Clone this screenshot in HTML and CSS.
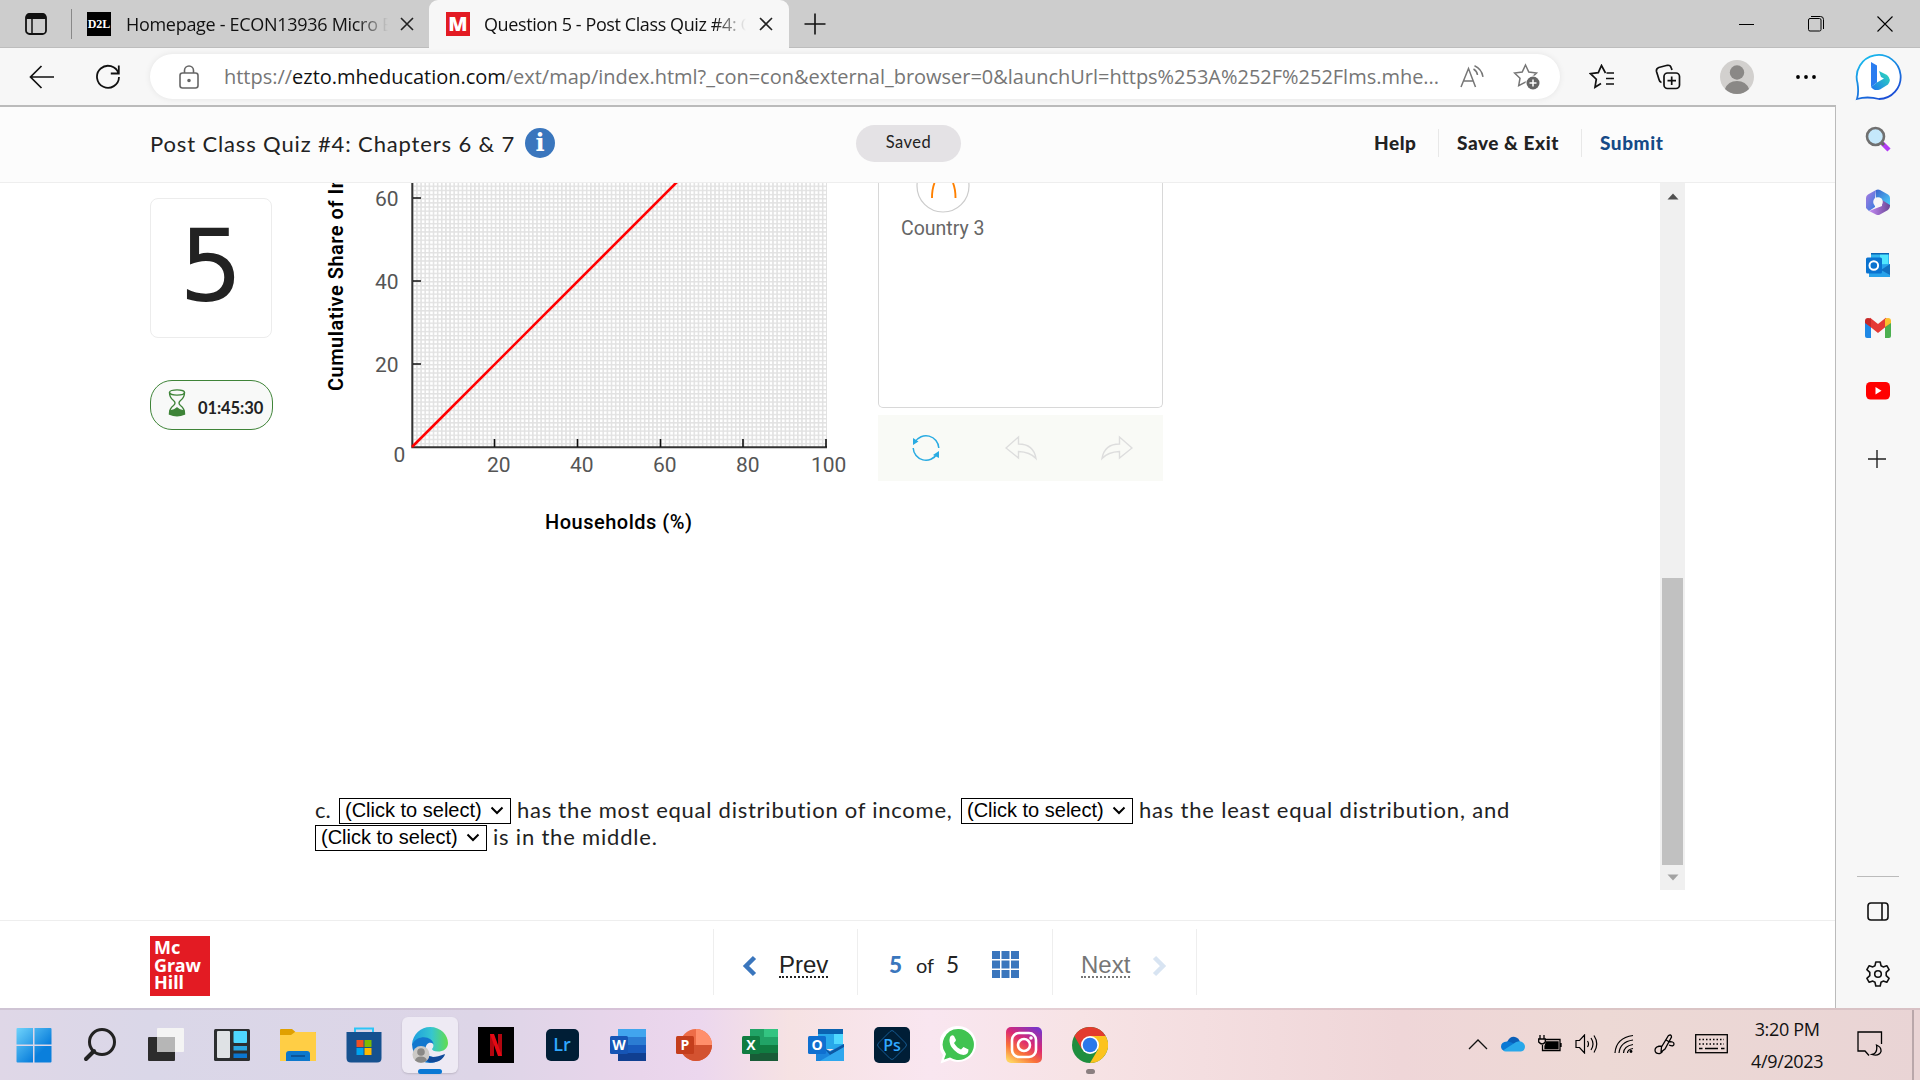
FILE: index.html
```html
<!DOCTYPE html>
<html lang="en">
<head>
  <meta charset="UTF-8" />
  <meta name="viewport" content="width=device-width, initial-scale=1.0"/>
  <title>Question 5 - Post Class Quiz #4: Chapters 6 &amp; 7</title>
  <link rel="stylesheet" href="styles.css">
</head>
<body>

  <!-- Tabs -->
  <div class="tab-bar">
    <svg class="workspace-icon" width="24" height="24" viewBox="0 0 24 24"><rect x="2" y="2" width="20" height="20" rx="3.500" fill="none" stroke="#111" stroke-width="1.800"/><path d="M2 7V5q0-3.500 3.500-3.500h13q3.500 0 3.500 3.500v2z" fill="#111"/><path d="M8 7v15" stroke="#111" stroke-width="1.500"/></svg>
    <div class="tab">
      <span class="favicon d2l">D2L</span>
      <span class="tab-title">Homepage - ECON13936 Micro E</span>
      <svg width="14" height="14" viewBox="0 0 14 14"><path d="M1 1l12 12M13 1L1 13" stroke="#222" stroke-width="1.600"/></svg>
    </div>
    <div class="tab active">
      <span class="favicon mh">M</span>
      <span class="tab-title">Question 5 - Post Class Quiz #4: C</span>
      <svg width="14" height="14" viewBox="0 0 14 14"><path d="M1 1l12 12M13 1L1 13" stroke="#222" stroke-width="1.600"/></svg>
    </div>
    <svg class="new-tab" width="22" height="22" viewBox="0 0 22 22"><path d="M11 0.500v21M0.500 11h21" stroke="#111" stroke-width="1.600"/></svg>
    <div class="window-buttons">
      <svg width="16" height="16" viewBox="0 0 16 16"><path d="M0 8.500h15" stroke="#000"/></svg>
      <svg width="16" height="16" viewBox="0 0 16 16" fill="none" stroke="#000"><rect x="0.500" y="2.500" width="12.500" height="12.500" rx="1.500"/><path d="M3 0.500h9.500q3 0 3 3v9.500"/></svg>
      <svg width="16" height="16" viewBox="0 0 16 16"><path d="M0.500 0.500l15 15M15.500 0.500l-15 15" stroke="#000" stroke-width="1.100"/></svg>
    </div>
  </div>

  <!-- Address bar -->
  <div class="toolbar">
    <svg class="back" width="26" height="24" viewBox="0 0 26 24" fill="none" stroke="#111" stroke-width="1.700"><path d="M25 12H2M12.500 1L1.500 12l11 11"/></svg>
    <svg class="reload" width="26" height="26" viewBox="0 0 26 26" fill="none" stroke="#111" stroke-width="1.800"><path d="M23.500 9.500A11 11 0 1 0 24 13M23.800 1.500v8h-8"/></svg>
    <div class="address">
      <svg width="20" height="24" viewBox="0 0 20 24" fill="none" stroke="#666" stroke-width="1.600"><rect x="1" y="8" width="18" height="15" rx="2.500"/><path d="M5.500 8V5.500a4.500 4.500 0 0 1 9 0V8"/><circle cx="10" cy="15.500" r="1" fill="#666"/></svg>
      <span class="url">https://<b>ezto.mheducation.com</b>/ext/map/index.html?_con=con&amp;external_browser=0&amp;launchUrl=https%253A%252F%252Flms.mhe...</span>
      <svg class="read-aloud" width="24" height="24" viewBox="0 0 24 24" fill="none" stroke="#767676" stroke-width="1.500"><path d="M1 22L8.500 3.500 15.500 22M3.500 16h10M13.500 4q3.500 2 4 6M14.500 .8q7 3 8.500 11"/></svg>
      <svg width="28" height="28" viewBox="0 0 28 28"><path d="M12.500 2l3.300 7 7.700 1-5.500 5.200 1.300 7.500-6.800-3.700-6.800 3.700L7 15.200 1.500 10l7.700-1z" fill="none" stroke="#767676" stroke-width="1.500"/><circle cx="20" cy="20" r="7.500" fill="#fff"/><circle cx="20" cy="20" r="6.500" fill="#666"/><path d="M20 16.500v7M16.500 20h7" stroke="#fff" stroke-width="1.500"/></svg>
    </div>
    <svg class="favorites" width="26" height="26" viewBox="0 0 26 26" fill="none" stroke="#111" stroke-width="1.700"><path d="M16.500 9L12.500 1.500 9.300 8.700 1.500 9.700 7.300 15.200 6 23.200 12 19.500M17.500 9H25M17 14.500h8M17 20h8"/></svg>
    <svg class="collections" width="26" height="26" viewBox="0 0 26 26" fill="none" stroke="#111" stroke-width="1.700"><rect x="9" y="9" width="15.500" height="15.500" rx="3.500"/><path d="M16.700 12.500v8.500M12.500 16.700H21M6.500 18.500Q4.500 18 4 15.500L1.500 7.500Q1 4.500 3.800 3.500l8.500-2.200Q15.500 .8 16.300 4l.7 2"/></svg>
    <svg class="avatar" width="34" height="34" viewBox="0 0 34 34"><circle cx="17" cy="17" r="17" fill="#d2d0ce"/><circle cx="17" cy="12.500" r="7.200" fill="#8a8886"/><path d="M5 29q3-8 12-8t12 8q-5 5-12 5T5 29" fill="#8a8886"/></svg>
    <svg class="more" width="20" height="4" viewBox="0 0 20 4"><circle cx="2" cy="2" r="1.900"/><circle cx="10" cy="2" r="1.900"/><circle cx="18" cy="2" r="1.900"/></svg>
    <svg class="bing" width="48" height="48" viewBox="0 0 48 48">
      <defs><linearGradient id="bingRing" x2="0.600" y2="1"><stop stop-color="#19c8f0"/><stop offset="1" stop-color="#1a4fd6"/></linearGradient><linearGradient id="bingTail" x1="1" x2="0" y2="1"><stop stop-color="#2ce0b8"/><stop offset="1" stop-color="#1e74f0"/></linearGradient></defs>
      <path d="M2 46Q4 40 2.500 30A22 22 0 1 1 24 46Q12 43 2 46z" fill="#fff" stroke="url(#bingRing)" stroke-width="1.800"/>
      <path d="M16 9l6 3.500v17L16 34z" fill="#2a7df0"/><path d="M16 34l6-4.500 7-4-3-1.500-2-6 8 4q5 4.500 1 9.500l-8 5q-6 2-9-2.500" fill="url(#bingTail)"/>
    </svg>
  </div>

  <div class="main">
    <div class="page">
      <header class="quiz-header">
        <h1>Post Class Quiz #4: Chapters 6 &amp; 7</h1>
        <span class="info">i</span>
        <span class="saved">Saved</span>
        <nav>
          <a class="help">Help</a>
          <a class="exit">Save &amp; Exit</a>
          <a class="submit">Submit</a>
        </nav>
      </header>

      <div class="content">
        <div class="question-side">
          <div class="question-number">5</div>
          <div class="timer">
            <svg width="18" height="28" viewBox="0 0 18 28" fill="none" stroke="#3e8438" stroke-width="1.400"><ellipse cx="9" cy="3.500" rx="7.500" ry="2.600"/><path d="M1.500 3.500q0 5 4 8 3 2.500 0 5-4 3-4 8M16.500 3.500q0 5-4 8-3 2.500 0 5 4 3 4 8"/><path d="M2 22q5-1 7-3 2 2 7 3l.5 3q-7.500 3.500-15 0z" fill="#3e8438"/></svg>
            <span>01:45:30</span>
          </div>
        </div>

        <div class="question">
          <div class="graph-row">
            <svg class="graph" width="563" height="370" viewBox="315 183 563 370">
              <defs>
                <pattern id="grid" x="412" y="447" width="4.140" height="4.150" patternUnits="userSpaceOnUse">
                  <path d="M0 0.750H4.140M0.750 0V4.150" stroke="#e2e2e2" stroke-width="1.600"/>
                </pattern>
              </defs>
              <rect x="412" y="183" width="415" height="264" fill="url(#grid)"/>
              <path d="M412.300 183V447.300H827" fill="none" stroke="#333" stroke-width="2"/>
              <path d="M413 364h8M413 281h8M413 198h8M494.500 439v8M577.500 439v8M660.500 439v8M743 439v8M826 439v8" stroke="#111" stroke-width="1.600"/>
              <path d="M412 447L677 182" stroke="#f00" stroke-width="2.600"/>
              <g class="ticks">
                <text x="375" y="206">60</text><text x="375" y="289">40</text><text x="375" y="372">20</text><text x="393.500" y="462">0</text>
                <text x="487" y="472">20</text><text x="570" y="472">40</text><text x="653" y="472">60</text><text x="736" y="472">80</text><text x="811" y="472">100</text>
              </g>
              <text class="axis-title" x="545" y="529">Households (%)</text>
              <text class="axis-title y-title" transform="translate(343 391) rotate(-90)">Cumulative Share of In</text>
            </svg>
            <div class="tools">
              <div class="tool-box">
                <svg width="54" height="30" viewBox="0 0 54 30" fill="none"><circle cx="27" cy="3" r="26" stroke="#ccc" stroke-width="1.200"/><path d="M16 15q0-9 2.500-15M39.500 15q0-9-2.500-15" stroke="#ff8000" stroke-width="1.900"/></svg>
                <span>Country 3</span>
              </div>
              <div class="tool-buttons">
                <svg width="30" height="30" viewBox="0 0 30 30" fill="none" stroke="#29abe2" stroke-width="1.500"><path d="M4 9A12.800 12.800 0 0 1 27.800 15M2.200 15A12.800 12.800 0 0 0 26 21"/><path d="M2 5v7l5.500-3.500zM28 25v-7l-6 4z" fill="#29abe2" stroke="none"/></svg>
                <svg width="32" height="26" viewBox="0 0 32 26" fill="none" stroke="#ddd" stroke-width="1.400"><path d="M1 13L13.500 2v7q15 0 17.500 14.500Q25 17 13.500 16.500V23z"/></svg>
                <svg width="32" height="26" viewBox="0 0 32 26" fill="none" stroke="#ddd" stroke-width="1.400"><path d="M31 13L18.500 2v7Q3.500 9 1 23.500 7 17 18.500 16.500V23z"/></svg>
              </div>
            </div>
          </div>

          <div class="statement">
            <p><span class="letter">c.</span><span class="select">(Click to select)<svg width="14" height="9" viewBox="0 0 14 9"><path d="M1.500 1.500L7 7l5.500-5.500" fill="none" stroke="#000" stroke-width="2"/></svg></span><span class="part-one">has the most equal distribution of income,</span><span class="select">(Click to select)<svg width="14" height="9" viewBox="0 0 14 9"><path d="M1.500 1.500L7 7l5.500-5.500" fill="none" stroke="#000" stroke-width="2"/></svg></span><span class="part-two">has the least equal distribution, and</span></p>
            <p><span class="select">(Click to select)<svg width="14" height="9" viewBox="0 0 14 9"><path d="M1.500 1.500L7 7l5.500-5.500" fill="none" stroke="#000" stroke-width="2"/></svg></span><span class="part-three">is in the middle.</span></p>
          </div>
        </div>

        <div class="scrollbar">
          <svg width="12" height="7" viewBox="0 0 12 7"><path d="M0.500 6.500L6 0.500l5.500 6z" fill="#505050"/></svg>
          <div class="thumb"></div>
          <svg width="12" height="7" viewBox="0 0 12 7"><path d="M0.500 0.500L6 6.500l5.500-6z" fill="#a3a3a3"/></svg>
        </div>
      </div>

      <footer class="quiz-footer">
        <div class="logo"><span>Mc</span><span>Graw</span><span>Hill</span></div>
        <div class="pager">
          <div class="prev">
            <svg width="15" height="22" viewBox="0 0 15 22"><path d="M12.500 2.500L4 11l8.500 8.500" fill="none" stroke="#3a76bd" stroke-width="4.500"/></svg>
            <a>Prev</a>
          </div>
          <div class="count">
            <b>5</b><span class="of">of</span><span>5</span>
            <svg width="27" height="27" viewBox="0 0 27 27" fill="#3a76bd"><path d="M0 0h8v8H0zM9.500 0h8v8h-8zM19 0h8v8h-8zM0 9.500h8v8H0zM9.500 9.500h8v8h-8zM19 9.500h8v8h-8zM0 19h8v8H0zM9.500 19h8v8h-8zM19 19h8v8h-8z"/></svg>
          </div>
          <div class="next">
            <a>Next</a>
            <svg width="15" height="22" viewBox="0 0 15 22"><path d="M2.500 2.500L11 11l-8.500 8.500" fill="none" stroke="#d8e4f2" stroke-width="4.500"/></svg>
          </div>
        </div>
      </footer>
    </div>

    <!-- Edge sidebar -->
    <aside class="sidebar">
      <svg width="26" height="26" viewBox="0 0 26 26"><path d="M17 17l7 7" stroke="#b33df5" stroke-width="4.500"/><path d="M16 16l3 3" stroke="#666" stroke-width="3"/><circle cx="10.500" cy="10.500" r="8.500" fill="#c5e8fb" stroke="#707070" stroke-width="2.600"/></svg>
      <svg width="26" height="28" viewBox="0 0 26 28">
        <defs><linearGradient id="mLeft" y2="1"><stop stop-color="#b07ae0"/><stop offset="1" stop-color="#2b7de0"/></linearGradient><linearGradient id="mBottom" x2="1"><stop stop-color="#c58bf5"/><stop offset="1" stop-color="#6a4796"/></linearGradient><linearGradient id="mRight" x2="1" y2="1"><stop stop-color="#3a62cc"/><stop offset="1" stop-color="#4bd0fa"/></linearGradient></defs>
        <path d="M11 2L3 6.500Q1 7.500 1 10v10l3 3 6-4V11z" fill="url(#mLeft)"/><path d="M4 23l7 3.500q2 1 4 0l8-4.500q2-1.500 2-4V16l-8-5v7z" fill="url(#mBottom)"/><path d="M11 2q2-1 4 0l8 4.500q2 1 2 3.500v7l-8-5-6-2z" fill="url(#mRight)"/><circle cx="13" cy="14" r="4.800" fill="#f7f7f7"/></svg>
      <svg width="26" height="26" viewBox="0 0 26 26"><path d="M6 1h18v15H6z" fill="#32b5ee"/><path d="M15 2h8v10h-8z" fill="#50e6ff"/><path d="M6 1h18v1.500H6z" fill="#0a64b4"/><path d="M4 14l21-2v13H4z" fill="#28a2ea"/><path d="M16 18l9-6v11z" fill="#1270c0"/><rect x="1" y="5.500" width="16" height="16" rx="1.500" fill="#0a73d0"/><circle cx="8.800" cy="13.500" r="4.300" fill="none" stroke="#fff" stroke-width="2"/></svg>
      <svg width="28" height="22" viewBox="0 0 28 22"><path d="M1 5h6v16H3q-2 0-2-2z" fill="#1e88e5"/><path d="M21 5h6v14q0 2-2 2h-4z" fill="#4caf50"/><path d="M4 3.500l10 8 10-8" fill="none" stroke="#e53935" stroke-width="7"/><path d="M1 4q0-3 3-3 1.500 0 3 1v8L1 6z" fill="#c62828"/><path d="M27 4q0-3-3-3-1.500 0-3 1v8l6-4z" fill="#fbc02d"/></svg>
      <svg width="24" height="18" viewBox="0 0 24 18"><rect width="24" height="17.500" rx="4.500" fill="#f00"/><path d="M9.500 5l6 3.700-6 3.700z" fill="#fff"/></svg>
      <svg class="add" width="18" height="18" viewBox="0 0 18 18"><path d="M9 0v18M0 9h18" stroke="#222" stroke-width="1.400"/></svg>
      <hr>
      <svg class="panel-icon" width="22" height="19" viewBox="0 0 22 19" fill="none" stroke="#111" stroke-width="1.600"><rect x="1" y="1" width="20" height="17" rx="3"/><path d="M15 1v17"/></svg>
      <svg width="26" height="26" viewBox="0 0 26 26" fill="none" stroke="#111" stroke-width="1.600" stroke-linejoin="round"><circle cx="13" cy="13" r="3.300"/><path d="M10.800 1h4.400l.8 3.700 2.200 1.200 3.600-1.200 2.300 3.900-2.900 2.700v3.400l2.900 2.700-2.300 3.900-3.600-1.200-2.200 1.200-.8 3.700h-4.400l-.8-3.700-2.200-1.200-3.600 1.200-2.300-3.900 2.900-2.700v-3.400L1.900 8.600l2.300-3.900 3.600 1.200L10 4.700z"/></svg>
    </aside>
  </div>

  <!-- Windows taskbar -->
  <div class="taskbar">
    <div class="apps">
      <div class="app"><svg width="36" height="36" viewBox="0 0 36 36"><defs><linearGradient id="win" x2="1" y2="1"><stop stop-color="#6fd3fb"/><stop offset="0.700" stop-color="#0a7fdc"/></linearGradient></defs><path d="M0.500 2q0-1 1-1H17v16.500H.5zM18.500 1h16q1 0 1 1v15.500h-17zM.5 19H17v16.500H1.500q-1 0-1-1zM18.500 19h17v15.500q0 1-1 1h-16z" fill="url(#win)"/></svg></div>
      <div class="app"><svg width="34" height="36" viewBox="0 0 34 36" fill="none" stroke="#222"><circle cx="19" cy="15" r="12.500" stroke-width="3"/><path d="M11 24l-8 8" stroke-width="4" stroke-linecap="round"/></svg></div>
      <div class="app"><svg width="36" height="34" viewBox="0 0 36 34"><rect y="9" width="27" height="24" rx="1" fill="#2c2c2c"/><rect x="9" width="27" height="24" rx="1" fill="#f4f4f4"/><path d="M9 9h18v15H9z" fill="#b6b6b6"/></svg></div>
      <div class="app"><svg width="36" height="34" viewBox="0 0 36 34"><rect y="1" width="36" height="32" rx="1.500" fill="#2c2e30"/><rect x="3" y="3" width="13" height="27" rx="1" fill="#dfe2e5"/><rect x="19.500" y="3" width="13.500" height="12" rx="1" fill="#4fd8ff"/><path d="M19.500 18H33v4.500H19.500z" fill="#2ba6e0"/><path d="M19.500 25.500H33V30H19.500z" fill="#0b76d1"/></svg></div>
      <div class="app"><svg width="36" height="34" viewBox="0 0 36 34"><path d="M0 2q0-1 1-1h11l3.500 3H35q1 0 1 1v6H0z" fill="#e0a000"/><path d="M0 7h11l4-3h20q1 0 1 1v28H0z" fill="#ffce45"/><path d="M6 33V26q0-3 3-3h18q3 0 3 3v7z" fill="#0d78cc"/><path d="M11 28h14" stroke="#0a4a8a" stroke-width="1.500"/></svg></div>
      <div class="app"><svg width="36" height="36" viewBox="0 0 36 36"><path d="M9 7V1.500h18V7" fill="none" stroke="#2cc5f7" stroke-width="2"/><path d="M.5 5h35v26q0 4.500-4.500 4.500H5Q.5 35.500.5 31z" fill="#16518f"/><path d="M10.500 13h7v7h-7z" fill="#f25022"/><path d="M18.500 13h7v7h-7z" fill="#7fba00"/><path d="M10.500 21h7v7h-7z" fill="#00a4ef"/><path d="M18.500 21h7v7h-7z" fill="#ffb900"/></svg></div>
      <div class="app open">
        <svg width="38" height="38" viewBox="0 0 38 38"><defs><linearGradient id="edgeTop" x2="1"><stop stop-color="#1d9de0"/><stop offset="0.550" stop-color="#36c6cf"/><stop offset="1" stop-color="#62dd4e"/></linearGradient></defs>
          <path d="M1 18C2 8 10 1 19 1c11 0 18 8 18 16 0 6-5 8.500-10 8.500-4 0-6-1.500-6-2.500 1-1 2-3 1-5-2-6-12-8-21 0" fill="url(#edgeTop)"/><path d="M1 18C8 7 22 11 22.500 18c-4-3-8 0-8 5 0 7 8 11 19 6Q28 37 19 37 2 36 1 18" fill="#1377ce"/><path d="M14.500 22q-1 14 19.500 6-1 4-6 7-10 4-16-3-2-5 2.500-10" fill="#114a9a"/><circle cx="10" cy="28.500" r="8.500" fill="#ccc9c6"/><circle cx="10" cy="26" r="3.800" fill="#8a8886"/><path d="M4 34.500q1-4 6-4t6 4q-6 4.500-12 0" fill="#8a8886"/></svg>
      </div>
      <div class="app"><svg width="36" height="36" viewBox="0 0 36 36"><path d="M0 0h36v36H0z"/><path d="M14 7v22M22 7v22" stroke="#b1060f" stroke-width="4"/><path d="M12 7h4l8 22h-4z" fill="#e50914"/></svg></div>
      <div class="app"><span class="tile lr">Lr</span></div>
      <div class="app"><svg width="36" height="34" viewBox="0 0 36 34"><path d="M8 1h28v8H8z" fill="#41a5ee"/><path d="M8 9h28v8H8z" fill="#2b7cd3"/><path d="M8 17h28v8H8z" fill="#185abd"/><path d="M8 25h28v8H8z" fill="#103f91"/><rect y="8" width="18" height="18" rx="1.500" fill="#1655b5"/><text x="9" y="22" class="office">W</text></svg></div>
      <div class="app"><svg width="36" height="34" viewBox="0 0 36 34"><circle cx="20" cy="17" r="16" fill="#ed6c47"/><path d="M20 1a16 16 0 0 1 16 16H20z" fill="#ff8f6b"/><path d="M4 17h32a16 16 0 0 1-32 0" fill="#d35230"/><rect y="8" width="18" height="18" rx="1.500" fill="#c43e1c"/><text x="9" y="22" class="office">P</text></svg></div>
      <div class="app"><svg width="36" height="34" viewBox="0 0 36 34"><path d="M8 1h28v32H8z" fill="#21a366"/><path d="M22 1h14v8H22z" fill="#33c481"/><path d="M8 17h28v8H8z" fill="#107c41"/><path d="M8 25h28v8H8z" fill="#185c37"/><rect y="8" width="18" height="18" rx="1.500" fill="#107c41"/><text x="9" y="22" class="office">X</text></svg></div>
      <div class="app"><svg width="36" height="34" viewBox="0 0 36 34"><path d="M10 1h25v20H10z" fill="#28a8ea"/><path d="M10 1h25v5H10z" fill="#0a62b0"/><path d="M26 6h9v10h-9z" fill="#50d9ff"/><path d="M8 16l14 7 14-7v17H8z" fill="#1a84dc"/><path d="M16 20l6 4 14-8v4l-14 7z" fill="#0c58a4"/><path d="M36 19v14H12z" fill="#2fa7ee"/><rect y="8" width="18" height="18" rx="1.500" fill="#0f6fd0"/><text x="9" y="22" class="office">O</text></svg></div>
      <div class="app"><span class="tile ps"><svg width="36" height="36" viewBox="0 0 36 36"><path d="M16 4.500q2-2 4 0L31.500 16q2 2 0 4L20 31.500q-2 2-4 0L4.500 20q-2-2 0-4z" fill="none" stroke="#155a92"/><text x="18" y="24">Ps</text></svg></span></div>
      <div class="app"><svg width="36" height="38" viewBox="0 0 36 38"><path d="M18 0a18 18 0 1 1-8 34L.5 37.500 3 29A18 18 0 0 1 18 0" fill="#fff"/><path d="M18 3a15.500 15.500 0 1 1-8 28.500L4 33.500 6 28A15.500 15.500 0 0 1 18 3" fill="#40c351"/><path d="M10 11q2-3 4-1l2 4q0 1-2 3 3 5 7 6.500l2.500-2.500 5 2.500q0 5-5 5.500-7-1-12-8-3-5-1.500-10" fill="#fff"/></svg></div>
      <div class="app"><svg width="36" height="36" viewBox="0 0 36 36"><defs><linearGradient id="insta" x1="0.200" y1="1" x2="0.800" y2="0"><stop stop-color="#ffd25f"/><stop offset="0.300" stop-color="#f9703a"/><stop offset="0.600" stop-color="#dc2872"/><stop offset="1" stop-color="#7a35c8"/></linearGradient></defs><rect width="36" height="36" rx="5" fill="url(#insta)"/><g fill="none" stroke="#fff" stroke-width="2.600"><rect x="6" y="6" width="24" height="24" rx="7"/><circle cx="18" cy="18" r="6"/></g><circle cx="25" cy="11" r="1.800" fill="#fff"/></svg></div>
      <div class="app running"><svg width="36" height="36" viewBox="0 0 36 36"><circle cx="18" cy="18" r="18" fill="#1e8e3e"/><path d="M2.400 9A18 18 0 0 1 33.600 9H18l-8 13.500z" fill="#e33b2e"/><path d="M33.600 9A18 18 0 0 1 18 36l8-13.500L18 9z" fill="#fcc31e"/><circle cx="18" cy="18" r="9" fill="#fff"/><circle cx="18" cy="18" r="7.300" fill="#2b78ea"/></svg></div>
    </div>

    <div class="tray">
      <svg width="20" height="12" viewBox="0 0 20 12"><path d="M1 11L10 2l9 9" fill="none" stroke="#111" stroke-width="1.300"/></svg>
      <svg class="cloud" width="24" height="16" viewBox="0 0 24 16"><path d="M6 6Q9 0 14 1q4 1 5 5l-6 4z" fill="#0a5fb8"/><path d="M4 15Q0 14 0 10.500 0 6 6 5.500q4 0 10 4L6 15z" fill="#0a78d4"/><path d="M12 8q4-3.500 8-2.500 4 1.500 4 5.500-.5 4-4 4.500H5q-2 0-3-1z" fill="#28a8ea"/></svg>
      <svg width="24" height="18" viewBox="0 0 24 18" fill="none" stroke="#000" stroke-width="1.300"><path d="M7 4.500h15v11H4.500V10M23 8v4M2 0v4M6 0v4M.7 4h6.600v3q-3 4-6.600 0z"/><path d="M8.500 7H20v6.500H7V11z" fill="#000"/></svg>
      <svg width="23" height="20" viewBox="0 0 23 20" fill="none" stroke="#000" stroke-width="1.200"><path d="M1 6.500h3.500L9.500 1v18l-5-5.500H1zM12.500 7q2 3 0 6M16 4q4 6 0 12M19 1.500q5.500 8.500 0 17"/></svg>
      <svg width="20" height="20" viewBox="0 0 20 20" fill="none" stroke="#000" stroke-width="1.200"><path d="M1 19Q2 4 19 1.500M5 19Q6 8 19 6M9.500 19Q10 12 19 10.500M13.500 19q0-3.500 5.500-4.500"/><circle cx="17" cy="17.500" r="1.400" fill="#000" stroke="none"/></svg>
      <svg width="21" height="21" viewBox="0 0 21 21" fill="none" stroke="#000" stroke-width="1.300"><path d="M14.500 1.500q3-1.500 3 1.500L11 15l-4 3 .5-5zM12 6l3.500 2M8 12q-7 0-7 4t5 3.500q3-1 2-3M14 8q6-1 6 2t-5 1"/></svg>
      <svg width="33" height="20" viewBox="0 0 33 20" fill="none" stroke="#000" stroke-width="1.300"><rect x="0.700" y="0.700" width="31.600" height="18"/><path d="M4 5.500h25M4 10h25" stroke-dasharray="1.500 2"/><path d="M4 14.500h3.500M10 14.500h13M26 14.500h3.500"/></svg>
      <div class="clock"><span>3:20 PM</span><span>4/9/2023</span></div>
      <svg width="26" height="26" viewBox="0 0 26 26" fill="none" stroke="#000" stroke-width="1.300"><path d="M12 24.500L8 20H1V1h23.500v12M19.500 14q5 2 4.500 6.500-2 5-9 3 6-1.500 4.500-9.500z"/></svg>
    </div>
  </div>

</body>
</html>
```
FILE: styles.css
```css
* {
  box-sizing: border-box;
}

body {
  margin: 0;
  width: 1920px;
  height: 1080px;
  overflow: hidden;
  background: #fff;
  color: #222;
  font-family: Lato, "Liberation Sans", sans-serif;
}

svg {
  display: block;
  flex: none;
}

/* Tabs */
.tab-bar {
  display: flex;
  align-items: center;
  height: 48px;
  background: #cdcdcd;
  border-bottom: 1px solid #bdbdbd;
  font-family: "Open Sans", "Noto Sans", sans-serif;
}

.workspace-icon {
  margin-left: 24px;
}

.tab {
  display: flex;
  align-items: center;
  height: 30px;
  margin-left: 23px;
  padding-left: 15px;
  width: 358px;
  border-left: 1px solid #888;
}

.tab.active {
  width: 360px;
  height: 48px;
  margin-left: 0;
  padding-left: 17px;
  background: #f7f7f7;
  border: 0;
  border-radius: 9px 9px 0 0;
}

.favicon {
  width: 24px;
  height: 24px;
  flex: none;
  color: #fff;
  text-align: center;
  line-height: 24px;
}

.d2l {
  background: #000;
  font: bold 12px/24px "Liberation Serif", serif;
}

.mh {
  background: #e31b23;
  font-size: 20px;
  font-weight: 800;
}

.tab-title {
  width: 262px;
  margin: 0 12px 0 15px;
  overflow: hidden;
  white-space: nowrap;
  font-size: 18px;
  letter-spacing: -0.3px;
  color: #111;
  -webkit-mask-image: linear-gradient(90deg, #000 88%, transparent 100%);
  mask-image: linear-gradient(90deg, #000 88%, transparent 100%);
}

.active .tab-title {
  margin-left: 14px;
  margin-right: 13px;
  letter-spacing: -0.4px;
}

.new-tab {
  margin-left: 15px;
}

.window-buttons {
  display: flex;
  gap: 53px;
  margin-left: auto;
  margin-right: 27px;
}

/* Address bar */
.toolbar {
  display: flex;
  align-items: center;
  height: 57px;
  background: #f7f7f7;
}

.back {
  margin-left: 29px;
}

.reload {
  margin-left: 40px;
}

.address {
  display: flex;
  align-items: center;
  width: 1410px;
  height: 45px;
  margin-left: 29px;
  padding-left: 29px;
  background: #fff;
  border-radius: 23px;
  box-shadow: 0 0 6px rgba(0,0,0,0.08);
}

.url {
  width: 1216px;
  margin-left: 25px;
  white-space: nowrap;
  font-family: "Open Sans", "Noto Sans", sans-serif;
  font-size: 20px;
  letter-spacing: -0.02px;
  color: #767676;
}

.url b {
  font-weight: 400;
  color: #111;
}

.read-aloud {
  margin: 0 29px 0 20px;
}

.favorites {
  margin-left: 29px;
}

.collections {
  margin-left: 40px;
}

.avatar {
  margin-left: 39px;
}

.more {
  margin-left: 42px;
}

.bing {
  margin-left: 39px;
}

/* Quiz page */
.main {
  display: flex;
  height: 903px;
}

.page {
  width: 1836px;
  border-top: 2px solid #bbb;
  border-right: 1px solid #bbb;
}

.quiz-header {
  display: flex;
  align-items: center;
  height: 76px;
  padding: 0 0 3px 150px;
  background: #fcfcfc;
  border-bottom: 1px solid #eee;
}

.quiz-header h1 {
  width: 375px;
  margin: 0;
  white-space: nowrap;
  font-size: 22px;
  font-weight: 400;
  letter-spacing: 0.86px;
}

.info {
  width: 30px;
  height: 30px;
  border-radius: 50%;
  background: #3a76bd;
  color: #fff;
  text-align: center;
  font: bold 24px/30px "DejaVu Serif", serif;
}

.saved {
  width: 105px;
  height: 37px;
  margin-left: 301px;
  border-radius: 19px;
  background: #e4e2e5;
  text-align: center;
  font-size: 16.5px;
  line-height: 34px;
  letter-spacing: 0.5px;
}

.quiz-header nav {
  display: flex;
  margin-left: 413px;
  white-space: nowrap;
  font-size: 19px;
  font-weight: 900;
  line-height: 28px;
  letter-spacing: 0.55px;
}

.help {
  width: 64px;
}

.exit {
  width: 143px;
  padding-left: 18px;
  border-left: 1px solid #e8e8e8;
}

.submit {
  padding-left: 18px;
  border-left: 1px solid #e8e8e8;
  color: #154a87;
}

.content {
  display: flex;
  height: 737px;
  padding-left: 150px;
}

.question-side {
  width: 165px;
}

.question-number {
  width: 122px;
  height: 140px;
  margin-top: 15px;
  border: 1px solid #ececec;
  border-radius: 8px;
  text-align: center;
  font-family: "DejaVu Sans", sans-serif;
  font-size: 100px;
  line-height: 136px;
}

.timer {
  display: flex;
  align-items: center;
  width: 123px;
  height: 50px;
  margin-top: 42px;
  padding-left: 17px;
  background: #f8f9f8;
  border: 1px solid #3f8438;
  border-radius: 22px;
  font-size: 16.500px;
  font-weight: 700;
  letter-spacing: -0.1px;
}

.timer svg {
  margin: 0 12px 4px 0;
}

.timer span {
  padding-top: 6px;
}

.question {
  width: 1345px;
}

.graph-row {
  display: flex;
  height: 614px;
}

.graph {
  font-family: Roboto, sans-serif;
}

.ticks {
  font-size: 21px;
  fill: #555;
}

.axis-title {
  font-size: 20px;
  font-weight: 500;
  letter-spacing: 0.5px;
  fill: #000;
}

.y-title {
  font-weight: 600;
}

.tools {
  width: 285px;
}

.tool-box {
  height: 225px;
  border: 1px solid #d8d8d8;
  border-top: 0;
  border-radius: 0 0 5px 5px;
  font-family: Roboto, sans-serif;
  font-size: 19.5px;
  color: #666;
}

.tool-box svg {
  margin-left: 36.5px;
}

.tool-box span {
  display: block;
  margin: 4px 0 0 22px;
}

.tool-buttons {
  display: flex;
  align-items: center;
  justify-content: space-between;
  height: 66px;
  margin-top: 7px;
  padding: 0 30px 1px 33px;
  background: #f9faf6;
}

.statement {
  font-size: 22px;
}

.statement p {
  display: flex;
  align-items: center;
  height: 27px;
  margin: 0;
  white-space: nowrap;
  line-height: 25px;
}

.letter {
  width: 24px;
}

.select {
  display: flex;
  align-items: center;
  justify-content: space-between;
  width: 172px;
  height: 26px;
  margin-right: 6px;
  padding: 0 6px 0 5px;
  border: 1px solid #000;
  color: #000;
  font-family: "Liberation Sans", sans-serif;
  font-size: 20px;
}

.part-one {
  width: 444px;
  letter-spacing: 0.75px;
}

.part-two,
.part-three {
  letter-spacing: 0.8px;
}

.letter,
.part-one,
.part-two,
.part-three {
  padding-bottom: 2px;
}

.scrollbar {
  display: flex;
  flex-direction: column;
  align-items: center;
  width: 25px;
  height: 707px;
  padding-top: 10px;
  background: #f0f0f0;
}

.thumb {
  width: 21px;
  height: 287px;
  margin: 378px 0 9px;
  background: #c1c1c1;
}

/* Footer */
.quiz-footer {
  display: flex;
  height: 88px;
  padding-left: 150px;
  border-top: 1px solid #eee;
}

.logo {
  display: flex;
  flex-direction: column;
  width: 60px;
  height: 60px;
  margin-top: 15px;
  padding: 3px 0 0 4px;
  background: #e31b23;
  color: #fff;
  font: 700 18px/17.5px "Noto Sans", sans-serif;
}

.pager {
  display: flex;
  height: 66px;
  margin: 8px 0 0 503px;
  border-left: 1px solid #eee;
}

.pager div {
  display: flex;
  align-items: center;
  padding-top: 7px;
  border-right: 1px solid #eee;
}

.prev,
.next {
  width: 144px;
}

.pager a {
  font-family: "Liberation Sans", sans-serif;
  font-size: 24px;
  line-height: 23px;
  border-bottom: 2px dotted #222;
}

.prev svg {
  margin: 0 22px 0 28px;
}

.next {
  color: #767676;
}

.pager .next a {
  margin: 0 22px 0 28px;
  border-color: #767676;
}

.pager .count {
  width: 195px;
  padding: 5px 0 0 31px;
  font-size: 22.5px;
}

.count b {
  width: 27px;
  font-weight: 900;
  color: #3a76bd;
}

.of {
  width: 30px;
  font-size: 20px;
}

.count svg {
  margin-left: 33px;
}

/* Edge sidebar */
.sidebar {
  display: flex;
  flex-direction: column;
  align-items: center;
  width: 84px;
  padding: 21px 1px 21px 0;
  background: #f7f7f7;
}

.sidebar svg + svg {
  margin-top: 36px;
}

.sidebar svg:nth-child(4) {
  margin-top: 39px;
}

.sidebar svg:nth-child(5) {
  margin-top: 43px;
}

.sidebar .add {
  margin: 50px 2px 0 0 !important;
}

.sidebar hr {
  width: 42px;
  margin: auto 0 25px;
  border: 0;
  border-top: 1px solid #bbb;
}

.sidebar .panel-icon + svg {
  margin-top: 40px;
}

/* Taskbar */
.taskbar {
  display: flex;
  justify-content: space-between;
  height: 72px;
  background: linear-gradient(90deg, #dfd7e7 0, #dad7e8 150px, #ddd5e7 480px, #e9d5eb 640px, #ecd7ee 700px, #f6e2e3 790px, #f9e6f0 930px, #f7e3e5 1080px, #efd6d8 1400px, #edd9d5 1600px, #e9d4d5 1920px);
  border-top: 2px solid rgba(120,90,110,0.15);
}

.apps {
  display: flex;
  padding-left: 1px;
}

.app {
  display: flex;
  align-items: center;
  justify-content: center;
  width: 66px;
}

.open {
  width: 56px;
  height: 56px;
  margin: 7px 5px 0;
  border-radius: 6px;
  background: #eeeaf4;
  box-shadow: 0 1px 2px rgba(0,0,0,0.15);
  position: relative;
}

.open::after,
.running::after {
  content: "";
  position: absolute;
  bottom: -1px;
  width: 24px;
  height: 5px;
  border-radius: 3px;
  background: #0a78d4;
}

.running {
  position: relative;
}

.running::after {
  bottom: 6px;
  width: 9px;
  background: #8b7f80;
}

.tile {
  width: 33px;
  height: 32px;
  border-radius: 5px;
  background: #001e36;
  color: #31a8ff;
  text-align: center;
  font: 600 18px/31px "Open Sans", sans-serif;
}

.ps {
  width: 36px;
  height: 36px;
}

.ps text {
  font-size: 16px;
  fill: #31a8ff;
  text-anchor: middle;
}

.office {
  font: bold 14px "Open Sans", sans-serif;
  fill: #fff;
  text-anchor: middle;
}

.tray {
  display: flex;
  align-items: center;
  gap: 13px;
  width: 446px;
  padding: 0 29px 2px 0;
  border-right: 2px solid #b9a7aa;
  margin-right: 6px;
}

.tray svg:nth-child(5) {
  margin-left: 3px;
}

.tray svg:nth-child(6) {
  margin-left: 7px;
}

.tray svg:nth-child(7) {
  margin-left: 7px;
}

.clock {
  display: flex;
  flex-direction: column;
  align-items: center;
  margin: 2px 21px 0 10px;
  font: 18px/32px "Open Sans", sans-serif;
  letter-spacing: -0.35px;
  color: #111;
}
```
